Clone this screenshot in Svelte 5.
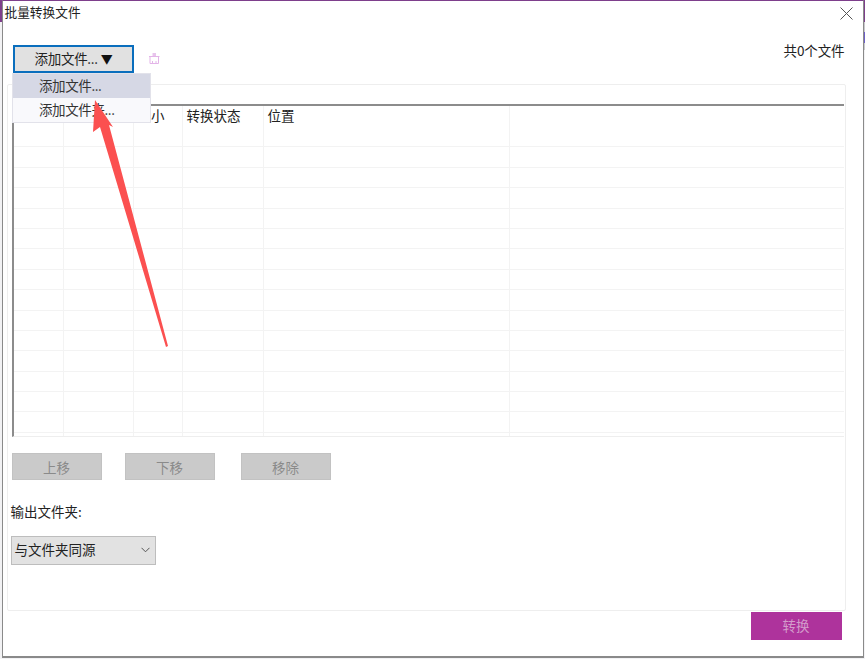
<script lang="ts">
  // first two header labels sit fully behind the open menu, so they stay empty
  const columns = [
    { label: '', width: 50 },
    { label: '', width: 70 },
    { label: '大小', width: 49 },
    { label: '转换状态', width: 81 },
    { label: '位置', width: 246 },
    { label: '', width: 0 }
  ];
  const rows = Array.from({ length: 16 }, (_, i) => i);
  const actions = ['上移', '下移', '移除'];
</script>

<div class="screen">
  <div class="window">
    <header class="titlebar">
      <span class="title">批量转换文件</span>
      <button class="close" type="button" aria-label="关闭">
        <svg width="13" height="13" viewBox="0 0 13 13"><path d="M.5.5l12 12M12.5.5l-12 12" stroke="#555" stroke-width="1" fill="none" /></svg>
      </button>
    </header>

    <div class="toolbar">
      <div class="add-wrap">
        <button class="add" type="button">添加文件...<span class="caret">▼</span></button>
        <div class="menu">
          <div class="menu-item active">添加文件...</div>
          <div class="menu-item">添加文件夹...</div>
        </div>
      </div>
      <svg class="clear" width="13" height="13" viewBox="0 0 13 13" aria-hidden="true">
        <path d="M4.500 4V1h3.500v3z" fill="#e8c4ec" />
        <path d="M1 4.500h10.500M2 4.500v7h8.500v-7M4.500 11.500V9M8 11.500V9" fill="none" stroke="#e3b4e8" stroke-width="1" />
      </svg>
      <span class="count">共0个文件</span>
    </div>

    <section class="panel">
      <div class="table">
        <div class="thead">
          {#each columns as col}
            <div class="th" class:fill={!col.width} style:width={col.width ? `${col.width}px` : null}>{col.label}</div>
          {/each}
        </div>
        {#each rows as r}
          <div class="tr">
            {#each columns as col}
              <div class="td" class:fill={!col.width} style:width={col.width ? `${col.width}px` : null}></div>
            {/each}
          </div>
        {/each}
      </div>

      <div class="actions">
        {#each actions as a}
          <button class="action" type="button" disabled>{a}</button>
        {/each}
      </div>

      <div class="output-label">输出文件夹:</div>
      <div class="select">
        <span class="select-value">与文件夹同源</span>
        <svg width="9" height="6" viewBox="0 0 9 6"><path d="M.5.800l4 4 4-4" fill="none" stroke="#555" stroke-width="1" /></svg>
      </div>
    </section>

    <footer class="footer">
      <button class="convert" type="button" disabled>转换</button>
    </footer>
  </div>

  <svg class="arrow" width="80" height="252" viewBox="0 0 80 252" aria-hidden="true">
    <path d="M5 2 L23 29 L19 27 L78 248 L76 249 L10 29 L3 34 Z" fill="#fb5050" />
  </svg>
</div>

<style>
  :global(body) {
    margin: 0;
    background: #f4f4f6;
    font-family: "Noto Sans CJK SC", "Noto Sans", sans-serif;
    color: #222;
  }

  .screen {
    position: relative;
    width: 865px;
    height: 659px;
    overflow: hidden;
    background:
      linear-gradient(#7e3f8c 0 22px, #c9c9cc 22px 32px, #6d5fc8 32px 43px, #c9c9cc 43px 50px, #f2f2f4 50px) right top / 3px 100% no-repeat,
      linear-gradient(#7e3f8c 0 22px, #f2f2f4 22px);
  }

  .window {
    box-sizing: border-box;
    width: 862px;
    height: 658px;
    margin-left: 1.500px;
    background: #fff;
    border: 1px solid #8a8a8a;
    border-top: 1px solid #7e3f8c;
    border-bottom: 2px solid #8a8a8a;
    display: flex;
    flex-direction: column;
  }

  .titlebar {
    height: 25px;
    padding: 0 9px 0 2px;
    display: flex;
    align-items: center;
    justify-content: space-between;
    flex: none;
  }
  .title { font-size: 12.700px; line-height: 24px; margin-bottom: 4px; }
  .close {
    border: 0;
    padding: 0;
    margin-right: 1px;
    background: none;
    display: flex;
  }

  .toolbar {
    height: 33px;
    margin-top: 16px;
    padding: 0 17px 0 10.500px;
    display: flex;
    align-items: flex-start;
    flex: none;
    position: relative;
    z-index: 2;
  }
  .add-wrap { position: relative; margin-top: 2.500px; }
  .add {
    box-sizing: border-box;
    display: block;
    width: 121px;
    height: 28px;
    padding: 0 0 2px;
    background: #e1e1e1;
    border: 2px solid #0a6ebd;
    font: inherit;
    font-size: 13.500px;
    letter-spacing: -0.3px;
    color: #222;
  }
  .caret { margin-left: 3px; font-size: 12px; color: #111; }
  .menu {
    position: absolute;
    top: 28px;
    left: -1px;
    width: 139px;
    background: #f9f9fc;
    border: 1px solid #e2e2ea;
    box-sizing: border-box;
  }
  .menu-item {
    height: 24px;
    line-height: 22px;
    padding-left: 26px;
    font-size: 13.500px;
    letter-spacing: -0.4px;
    color: #333;
  }
  .menu-item.active { background: #d6d8e5; }
  .clear { margin: 9.500px 0 0 14px; }
  .count { margin: -1px 1px 0 auto; font-size: 13.500px; line-height: 19px; letter-spacing: -0.1px; }

  .panel {
    box-sizing: border-box;
    flex: none;
    width: 839px;
    height: 527px;
    margin-left: 4px;
    margin-top: 9px;
    border: 1px solid #eeeeee;
    border-radius: 2px;
    padding: 19px 0 0 4px;
  }

  .table {
    box-sizing: border-box;
    width: 832px;
    height: 333px;
    overflow: hidden;
    border-left: 2px solid #8c8c8c;
    border-top: 2px solid #8c8c8c;
    border-bottom: 1px solid #eeeeee;
  }
  .thead { display: flex; height: 21px; }
  .th {
    box-sizing: border-box;
    flex: none;
    padding-left: 4px;
    font-size: 13.500px;
    line-height: 18px;
    height: 21px;
    border-right: 1px solid #f3f3f3;
  }
  .tr { display: flex; height: 20.400px; border-bottom: 1px solid #f3f3f3; box-sizing: border-box; }
  .td { box-sizing: border-box; flex: none; border-right: 1px solid #f3f3f3; }
  .th.fill, .td.fill { flex: 1; border-right: 0; }

  .actions {
    display: flex;
    gap: 23px;
    margin-top: 16px;
  }
  .action {
    box-sizing: border-box;
    width: 90px;
    height: 27px;
    padding: 0;
    background: #cacaca;
    border: 1px solid #c2c2c2;
    color: #8a8a8a;
    font: inherit;
    font-size: 13.500px;
  }
  .action:nth-child(3) { margin-left: 3px; }

  .output-label {
    margin-top: 21px;
    margin-left: -1px;
    font-size: 13.500px;
    line-height: 20px;
  }
  .select {
    box-sizing: border-box;
    width: 145px;
    height: 29px;
    margin-top: 15px;
    margin-left: -1px;
    padding: 0 5px 2px 3px;
    display: flex;
    align-items: center;
    justify-content: space-between;
    background: #e2e2e2;
    border: 1px solid #bdbdbd;
    font-size: 13.500px;
  }
  .select-value { margin-bottom: 2px; }

  .footer {
    flex: none;
    display: flex;
    justify-content: flex-end;
    padding: 1px 21px 0 0;
  }
  .convert {
    width: 91px;
    height: 28px;
    padding: 0 0 2px;
    background: #ae339c;
    border: 0;
    color: #d39ccb;
    font: inherit;
    font-size: 13.500px;
  }

  .arrow {
    position: absolute;
    left: 90px;
    top: 98px;
    z-index: 3;
  }
</style>
